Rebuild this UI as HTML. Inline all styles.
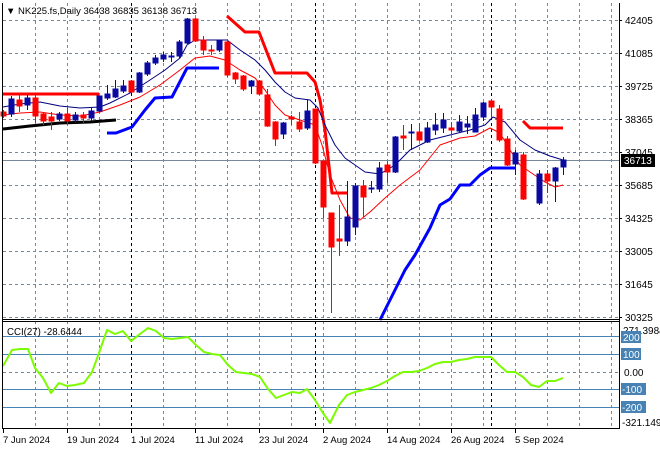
<!DOCTYPE html>
<html><head><meta charset="utf-8"><style>
html,body{margin:0;padding:0;background:#fff;width:660px;height:450px;overflow:hidden}
svg{display:block;font-family:"Liberation Sans",sans-serif}
</style></head><body>
<svg width="660" height="450" viewBox="0 0 660 450" xmlns="http://www.w3.org/2000/svg">
<rect width="660" height="450" fill="#fff"/>
<g stroke="#778899" stroke-width="1" stroke-dasharray="3,3" fill="none">
<path d="M3 20.5H619M3 53.5H619M3 86.5H619M3 119.5H619M3 152.5H619M3 185.5H619M3 218.5H619M3 251.5H619M3 284.5H619M3 317.5H619"/>
<path d="M35.5 3V428M67.5 3V428M99.5 3V428M163.5 3V428M195.5 3V428M227.5 3V428M259.5 3V428M291.5 3V428M323.5 3V428M355.5 3V428M387.5 3V428M419.5 3V428M451.5 3V428M483.5 3V428M515.5 3V428M547.5 3V428M579.5 3V428M611.5 3V428"/>
<path d="M3 372.5H619"/>
</g>
<g stroke="#000" stroke-dasharray="3,3"><path d="M131.5 3V428M315.5 3V428M491.5 3V428"/></g>
<path d="M3 160.5H619" stroke="#778899"/>
<g stroke="#4682b4"><path d="M3 336.5H619M3 354.5H619M3 389.5H619M3 407.5H619"/></g>
<g fill="none" stroke-linejoin="round">
<polyline stroke="#ff0000" stroke-width="3" points="3,94 99,94"/>
<polyline stroke="#ff0000" stroke-width="3" points="227,16 245,32 259,32 275,73 307,73 315,82 320,100 325,130 332,193 347,193"/>
<polyline stroke="#ff0000" stroke-width="3" points="523,121 530,128 563,128"/>
<polyline stroke="#0000ff" stroke-width="3" points="107,133 116,133 132,127 145,110 155,98 172,97 187,68 219,68"/>
<polyline stroke="#0000ff" stroke-width="3" points="380,320 395,290 405,270 415,255 430,228 440,205 450,199 460,185 470,185 480,175 490,168 515,168"/>
<polyline stroke="#000" stroke-width="3" points="3,129 30,126 60,123 90,122 116,120"/>
<polyline stroke="#000080" stroke-width="1" points="3,107 20,104 40,102 60,106 80,108 100,107 110,103 130,93 150,80 165,70 180,58 187,45 195,40 210,40 227,40 240,50 255,60 265,70 275,82 285,92 295,98 310,100 318,108 325,125 335,145 345,158 355,165 365,172 380,174 395,165 410,150 430,140 450,135 470,130 485,125 493,117 505,122 520,140 535,150 550,156 563,160"/>
<polyline stroke="#ff0000" stroke-width="1" points="3,115 20,113 40,112 60,115 80,116 100,112 120,105 140,97 160,85 180,70 195,58 210,56 225,60 240,70 255,78 265,90 275,105 285,115 300,120 315,125 322,145 330,175 340,200 350,218 360,220 370,212 385,198 400,185 420,170 440,145 460,138 475,136 490,128 500,133 510,150 520,165 530,172 545,182 555,187 563,185"/>
<polyline stroke="#7cfc00" stroke-width="2" points="3,366 12,350 20,349 28,349 35,368 43,378 51,393 59,383 67,386 75,385 84,383 92,372 99,353 107,330 115,334 123,331 131,341 140,334 148,328 156,331 164,338 172,339 180,338 188,337 196,345 204,352 212,354 220,355 228,365 236,372 244,373 252,374 260,377 268,389 276,398 284,395 292,392 300,393 307,389 315,400 323,413 330,423 339,405 347,395 355,392 363,390 371,388 379,385 387,381 395,376 403,372 411,372 419,371 427,368 435,364 443,362 451,362 459,360 467,359 475,357 483,357 491,357 499,365 507,372 515,372 523,377 531,385 539,387 547,381 555,381 563,378"/>
</g>
<g stroke-width="1">
<g stroke="#ff0000" fill="#ff0000">
<path d="M3.5 110V118M19.5 95V112M35.5 95V123M43.5 112V125M51.5 112V130M67.5 108V125M83.5 112V123M131.5 80V93M195.5 18V42M203.5 36V55M211.5 45V55M227.5 40V77M235.5 72V84M243.5 75V91M259.5 80V95M267.5 89V127M275.5 121V146M291.5 115V125M299.5 112V132M315.5 109V164M323.5 161V218M331.5 213V313M339.5 205V256M363.5 180V217M387.5 161V183M403.5 125V150M419.5 123V141M451.5 122V135M491.5 99V118M499.5 105V142M507.5 136V166M523.5 152V200M547.5 170V193"/>
<rect x="1" y="112" width="5" height="4"/><rect x="17" y="100" width="5" height="6"/><rect x="33" y="98" width="5" height="18"/><rect x="41" y="114" width="5" height="7"/><rect x="49" y="117" width="5" height="4"/><rect x="65" y="114" width="5" height="7"/><rect x="81" y="115" width="5" height="3"/><rect x="129" y="81" width="5" height="11"/><rect x="193" y="19" width="5" height="22"/><rect x="201" y="40" width="5" height="10"/><rect x="209" y="50" width="5" height="1"/><rect x="225" y="42" width="5" height="33"/><rect x="233" y="73" width="5" height="6"/><rect x="241" y="76" width="5" height="13"/><rect x="257" y="81" width="5" height="13"/><rect x="265" y="95" width="5" height="31"/><rect x="273" y="122" width="5" height="17"/><rect x="289" y="117" width="5" height="2"/><rect x="297" y="122" width="5" height="7"/><rect x="313" y="109" width="5" height="54"/><rect x="321" y="161" width="5" height="46"/><rect x="329" y="213" width="5" height="34"/><rect x="337" y="239" width="5" height="2"/><rect x="361" y="186" width="5" height="11"/><rect x="385" y="165" width="5" height="7"/><rect x="401" y="136" width="5" height="2"/><rect x="417" y="132" width="5" height="8"/><rect x="449" y="128" width="5" height="2"/><rect x="489" y="101" width="5" height="6"/><rect x="497" y="109" width="5" height="31"/><rect x="505" y="139" width="5" height="26"/><rect x="521" y="155" width="5" height="44"/><rect x="545" y="174" width="5" height="7"/>
</g>
<g stroke="#0a0aa0" fill="#0a0aa0">
<path d="M11.5 96V117M27.5 95V110M59.5 112V121M75.5 112V123M91.5 108V121M99.5 96V112M107.5 85V100M115.5 80V98M123.5 80V93M139.5 72V93M147.5 61V76M155.5 55V65M163.5 52V62M171.5 52V62M179.5 40V58M187.5 18V44M219.5 40V52M251.5 80V94M283.5 122V139M307.5 99V130M347.5 181V246M355.5 183V235M371.5 181V193M379.5 162V192M395.5 136V173M411.5 124V150M427.5 122V143M435.5 113V135M443.5 113V133M459.5 115V133M467.5 116V134M475.5 108V132M483.5 102V121M515.5 150V175M539.5 170V205M555.5 167V202M563.5 157V175"/>
<rect x="9" y="99" width="5" height="15"/><rect x="25" y="98" width="5" height="7"/><rect x="57" y="114" width="5" height="5"/><rect x="73" y="115" width="5" height="5"/><rect x="89" y="111" width="5" height="7"/><rect x="97" y="96" width="5" height="15"/><rect x="105" y="94" width="5" height="4"/><rect x="113" y="89" width="5" height="8"/><rect x="121" y="86" width="5" height="5"/><rect x="137" y="73" width="5" height="19"/><rect x="145" y="63" width="5" height="11"/><rect x="153" y="58" width="5" height="5"/><rect x="161" y="55" width="5" height="4"/><rect x="169" y="56" width="5" height="1"/><rect x="177" y="42" width="5" height="14"/><rect x="185" y="19" width="5" height="24"/><rect x="217" y="41" width="5" height="9"/><rect x="249" y="81" width="5" height="5"/><rect x="281" y="123" width="5" height="11"/><rect x="305" y="111" width="5" height="17"/><rect x="345" y="217" width="5" height="24"/><rect x="353" y="186" width="5" height="41"/><rect x="369" y="188" width="5" height="1"/><rect x="377" y="168" width="5" height="21"/><rect x="393" y="137" width="5" height="35"/><rect x="409" y="132" width="5" height="1"/><rect x="425" y="128" width="5" height="14"/><rect x="433" y="125" width="5" height="5"/><rect x="441" y="120" width="5" height="8"/><rect x="457" y="122" width="5" height="9"/><rect x="465" y="124" width="5" height="3"/><rect x="473" y="115" width="5" height="17"/><rect x="481" y="103" width="5" height="14"/><rect x="513" y="153" width="5" height="11"/><rect x="537" y="174" width="5" height="29"/><rect x="553" y="168" width="5" height="13"/><rect x="561" y="160" width="5" height="7"/>
</g>
</g>
<g stroke="#000" fill="none" stroke-width="1">
<path d="M2.5 3V428.5H619.5V3"/>
<path d="M2.5 319.5H619.5M2.5 321.5H619.5"/>
<path d="M619 20.5h3M619 53.5h3M619 86.5h3M619 119.5h3M619 152.5h3M619 185.5h3M619 218.5h3M619 251.5h3M619 284.5h3M619 317.5h3"/>
<path d="M3.5 428V433M67.5 428V433M131.5 428V433M195.5 428V433M259.5 428V433M323.5 428V433M387.5 428V433M451.5 428V433M515.5 428V433"/>
</g>
<g font-size="10" fill="#000">
<text x="6" y="14" font-size="9.5">▼</text>
<text x="18" y="14" font-size="9.5">NK225.fs,Daily  36438 36835 36138 36713</text>
<text x="625" y="24">42405</text><text x="625" y="57">41085</text><text x="625" y="90">39725</text><text x="625" y="123">38365</text><text x="625" y="156">37045</text><text x="625" y="189">35685</text><text x="625" y="222">34325</text><text x="625" y="255">33005</text><text x="625" y="288">31645</text><text x="625" y="321">30325</text>
</g>
<rect x="621" y="154" width="34" height="13" fill="#000"/>
<text x="624" y="164" font-size="10" fill="#fff">36713</text>
<g font-size="10">
<text x="623" y="334" fill="#000">271.3984</text>
<rect x="621" y="331" width="20" height="12" fill="#4682b4"/><text x="623" y="341" fill="#fff">200</text>
<rect x="621" y="348" width="20" height="12" fill="#4682b4"/><text x="623" y="358" fill="#fff">100</text>
<text x="624" y="376" fill="#000">0.00</text>
<rect x="621" y="383" width="25" height="12" fill="#4682b4"/><text x="622" y="393" fill="#fff">-100</text>
<rect x="621" y="401" width="25" height="12" fill="#4682b4"/><text x="622" y="411" fill="#fff">-200</text>
<text x="622" y="426" fill="#000">-321.149</text>
<text x="7" y="335" fill="#000" font-size="9.7">CCI(27) -28.6444</text>
</g>
<g font-size="9.5" fill="#000">
<text x="3" y="443">7 Jun 2024</text><text x="67" y="443">19 Jun 2024</text><text x="131" y="443">1 Jul 2024</text><text x="195" y="443">11 Jul 2024</text><text x="259" y="443">23 Jul 2024</text><text x="323" y="443">2 Aug 2024</text><text x="387" y="443">14 Aug 2024</text><text x="451" y="443">26 Aug 2024</text><text x="515" y="443">5 Sep 2024</text>
</g>
</svg>
</body></html>
